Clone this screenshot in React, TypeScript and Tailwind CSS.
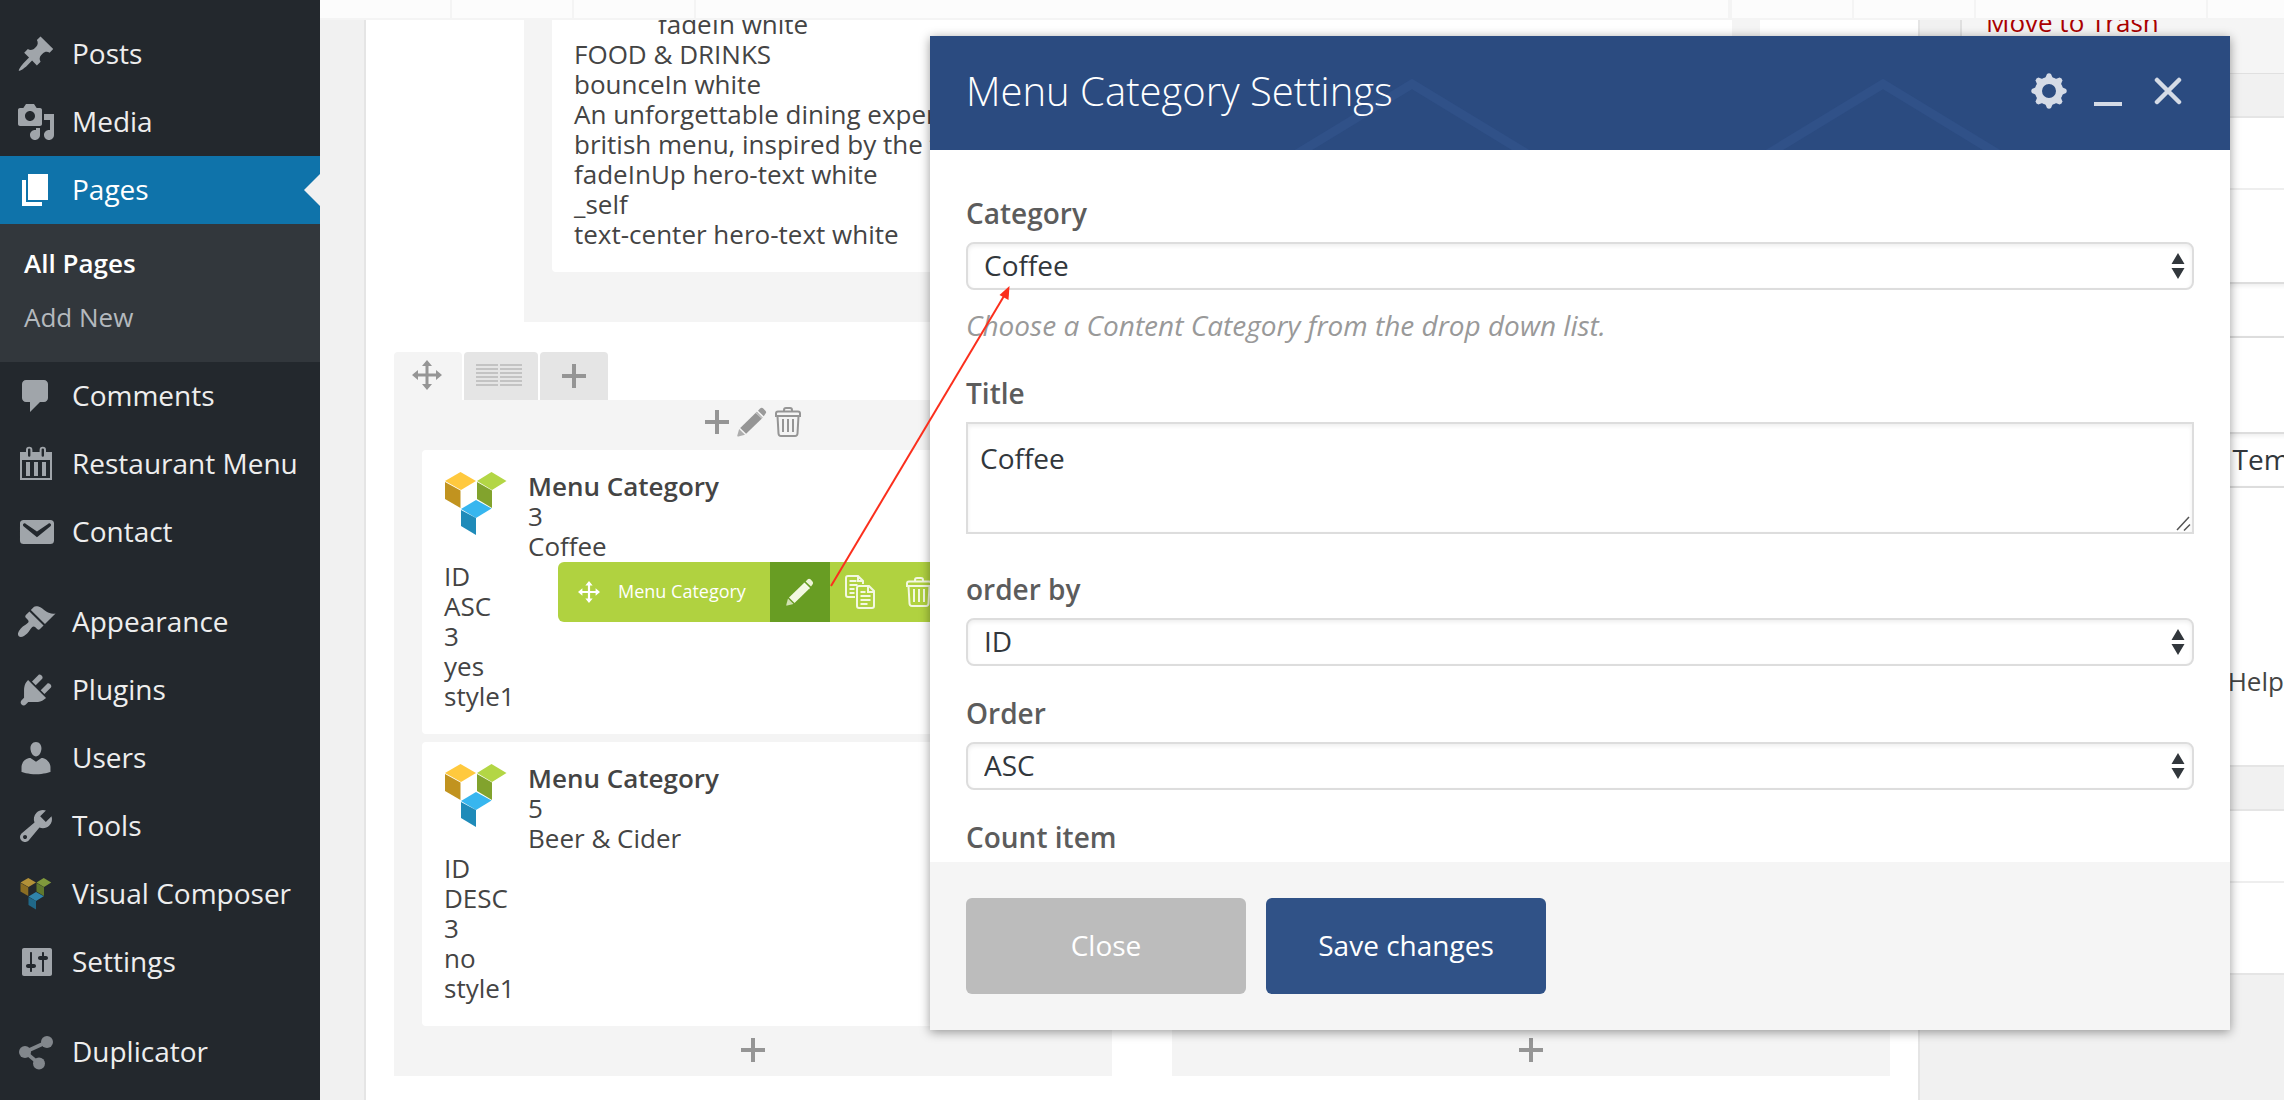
import React from "react";

type IconProps = { className?: string };

const dashicons = {
  posts:
    "M10.44 3.02l1.82-1.82 6.36 6.35-1.83 1.82c-1.05-.68-2.48-.57-3.41.36l-.75.75c-.92.93-1.04 2.35-.35 3.41l-1.83 1.82-2.41-2.41-2.8 2.79c-.42.42-3.38 2.71-3.8 2.29s1.86-3.39 2.28-3.81l2.79-2.79L4.1 9.36l1.83-1.82c1.05.69 2.48.57 3.4-.36l.75-.75c.93-.92 1.05-2.35.36-3.41z",
  media:
    "M13 11V4c0-.55-.45-1-1-1h-1.67L9 1H5L3.67 3H2c-.55 0-1 .45-1 1v7c0 .55.45 1 1 1h10c.55 0 1-.45 1-1zM7 4.5c1.38 0 2.5 1.12 2.5 2.5S8.38 9.5 7 9.5 4.5 8.38 4.5 7 5.62 4.5 7 4.5zM14 6h5v10.5c0 1.38-1.12 2.5-2.5 2.5S14 17.88 14 16.5s1.12-2.5 2.5-2.5c.17 0 .34.02.5.05V9h-3V6zm-4 8.05V13h2v3.5c0 1.38-1.12 2.5-2.5 2.5S7 17.88 7 16.5 8.12 14 9.5 14c.17 0 .34.02.5.05z",
  pages: "M6 15V2h10v13H6zm-1 1h8v2H3V5h2v11z",
  comments:
    "M5 2h9c1.1 0 2 .9 2 2v7c0 1.1-.9 2-2 2h-2l-5 5v-5H5c-1.1 0-2-.9-2-2V4c0-1.1.9-2 2-2z",
  restaurant:
    "M2 4h3V3a1.6 1.6 0 0 1 3.200 0v1h3.600V3a1.6 1.6 0 0 1 3.200 0v1h3v14H2zM3 8v9h14V8zM6 2.800v3a.6.6 0 0 0 1.200 0v-3a.6.6 0 0 0-1.200 0zM12.800 2.800v3a.6.6 0 0 0 1.200 0v-3a.6.6 0 0 0-1.200 0zM5 9h2v7H5zM9 9h2v7H9zM13 9h2v7h-2z",
  contact:
    "M3.870 4h13.250C18.370 4 19 4.590 19 5.790v8.420c0 1.190-.63 1.790-1.880 1.790H3.870c-1.250 0-1.880-.6-1.880-1.790V5.790c0-1.200.63-1.790 1.880-1.790zm6.620 8.600l6.740-5.530c.24-.2.43-.66.13-1.070-.29-.41-.82-.42-1.170-.17l-5.700 3.860L4.800 5.830c-.35-.25-.88-.24-1.170.17-.3.41-.11.87.13 1.070z",
  appearance:
    "M14.48 11.06L7.41 3.99l1.5-1.5c.5-.56 2.3-.47 3.51.32 1.21.8 1.43 1.28 2.91 2.1 1.18.64 2.45 1.26 4.45.85zm-.71.71L6.7 4.7 4.93 6.47c-.39.39-.39 1.02 0 1.41l1.06 1.06c.39.39.39 1.03 0 1.42-.6.6-1.43 1.11-2.21 1.69-.35.26-.7.53-1.01.84C1.43 14.23.4 16.08 1.4 17.07c.99 1 2.84-.03 4.18-1.36.31-.31.58-.66.85-1.02.57-.78 1.08-1.61 1.69-2.21.39-.39 1.02-.39 1.41 0l1.06 1.06c.39.39 1.02.39 1.41 0z",
  plugins:
    "M13.11 4.36L9.87 7.6 8 5.73l3.24-3.24c.35-.34 1.05-.2 1.56.32.52.51.66 1.21.31 1.55zm-8 1.77l.91-1.12 9.01 9.01-1.19.84c-.71.71-2.63 1.16-3.82 1.16H6.14L4.9 17.26c-.59.59-1.54.59-2.12 0-.59-.58-.59-1.53 0-2.12l1.24-1.24v-3.88c0-1.13.4-3.19 1.09-3.89zm7.26 3.97l3.24-3.24c.34-.35 1.04-.21 1.55.31.52.51.66 1.21.31 1.55l-3.24 3.25z",
  users:
    "M10 9.25c-2.27 0-2.73-3.44-2.73-3.44C7 4.02 7.82 2 9.97 2c2.16 0 2.98 2.02 2.71 3.81 0 0-.41 3.44-2.68 3.44zm0 2.57L12.72 10c2.39 0 4.52 2.33 4.52 4.53v2.49s-3.65 1.13-7.24 1.13c-3.65 0-7.24-1.13-7.24-1.13v-2.49c0-2.25 1.94-4.48 4.47-4.48z",
  tools:
    "M16.68 9.77c-1.34 1.34-3.3 1.67-4.95.99l-5.41 6.52c-.99.99-2.59.99-3.58 0s-.99-2.59 0-3.57l6.52-5.42c-.68-1.65-.35-3.61.99-4.95 1.28-1.28 3.12-1.62 4.72-1.06l-2.89 2.89 2.82 2.82 2.86-2.87c.53 1.58.18 3.39-1.08 4.65zM3.81 16.21c.4.39 1.04.39 1.43 0 .4-.4.4-1.04 0-1.43-.39-.4-1.03-.4-1.43 0-.39.39-.39 1.03 0 1.43z",
  settings:
    "M18 16V4c0-.55-.45-1-1-1H4c-.55 0-1 .45-1 1v12c0 .55.45 1 1 1h13c.55 0 1-.45 1-1zM8 11h1c.55 0 1 .45 1 1s-.45 1-1 1H8v1.5c0 .28-.22.5-.5.5s-.5-.22-.5-.5V13H6c-.55 0-1-.45-1-1s.45-1 1-1h1V5.5c0-.28.22-.5.5-.5s.5.22.5.5V11zm5-2h-1c-.55 0-1-.45-1-1s.45-1 1-1h1V5.5c0-.28.22-.5.5-.5s.5.22.5.5V7h1c.55 0 1 .45 1 1s-.45 1-1 1h-1v5.5c0 .28-.22.5-.5.5s-.5-.22-.5-.5V9z",
};

function Dashicon({ d, className = "" }: { d: string; className?: string }) {
  return (
    <svg viewBox="0 0 20 20" fill="currentColor" fillRule="evenodd" aria-hidden="true" className={`size-10 shrink-0 ${className}`}>
      <path d={d} />
    </svg>
  );
}

function ComposerLogo({ className = "" }: IconProps) {
  return (
    <svg viewBox="0 0 62 64" aria-hidden="true" className={className}>
      <path fill="#ffc93e" d="M0 9 15.500 0 31 9 16 18z" />
      <path fill="#c1931f" d="M0 10 15.500 18.500V36L0 27z" />
      <path fill="#b3d645" d="M32 9 46.500 0 61.500 9 47 18z" />
      <path fill="#82a32d" d="M32 10 47 18.500V36L32 27z" />
      <path fill="#37b6ef" d="M16 37 31 28 46.500 36.500 31 46z" />
      <path fill="#1f8bb9" d="M16 38 31 46V63L16 54z" />
    </svg>
  );
}

function ShareNodes() {
  return (
    <svg viewBox="0 0 20 20" aria-hidden="true" className="size-10 shrink-0 text-[#82878c]" fill="currentColor">
      <path d="M15.500 5 4.500 10l7 5.800" fill="none" stroke="currentColor" strokeWidth="1.900" />
      <circle cx="15.500" cy="5" r="3" />
      <circle cx="4.500" cy="10" r="3" />
      <circle cx="11.500" cy="15.800" r="3" />
    </svg>
  );
}

function PlusIcon({ className = "" }: IconProps) {
  return (
    <svg viewBox="0 0 24 24" aria-hidden="true" className={className} fill="currentColor">
      <path d="M10 0h4v10h10v4H14v10h-4V14H0v-4h10z" />
    </svg>
  );
}

function MoveIcon({ className = "" }: IconProps) {
  return (
    <svg viewBox="0 0 30 30" aria-hidden="true" className={className} fill="currentColor">
      <path d="M15 0l5 6h-3.500v7.500H24V10l6 5-6 5v-3.500h-7.500V24H20l-5 6-5-6h3.500v-7.500H6V20l-6-5 6-5v3.500h7.500V6H10z" />
    </svg>
  );
}

function PencilIcon({ className = "" }: IconProps) {
  return (
    <svg viewBox="0 0 28 28" aria-hidden="true" className={className} fill="currentColor">
      <path d="M18.500 4.500l5.500 5.500L8.500 25 3 19.500z" />
      <path d="M19.600 3.400l1.900-1.900q1.500-1.500 3-.2l2 2.100q1.400 1.500 0 3l-1.500 2.200z" opacity=".95" />
      <path d="M17.700 5.300l6 5.600" stroke="#fff" strokeOpacity=".5" strokeWidth="1" />
      <path d="M2 20.500L7.500 26l-6.300 1.600Q0 27.800.3 26.700z" opacity=".75" />
    </svg>
  );
}

function TrashIcon({ className = "" }: IconProps) {
  return (
    <svg viewBox="0 0 26 30" aria-hidden="true" className={className} fill="none" stroke="currentColor" strokeWidth="2">
      <path d="M9 4.500V3q0-2 2-2h4q2 0 2 2v1.500" />
      <path d="M3 4.500h20q2 0 2 2V9H1V6.500q0-2 2-2z" />
      <path d="M2.500 9l1 17.500q.2 2.500 2.500 2.500h14q2.300 0 2.500-2.500l1-17.500M8 12v13M13 12v13M18 12v13" />
    </svg>
  );
}

function CopyIcon({ className = "" }: IconProps) {
  return (
    <svg viewBox="0 0 30 34" aria-hidden="true" className={className} fill="none" stroke="currentColor" strokeWidth="2">
      <path d="M10 22H3q-2 0-2-2V3q0-2 2-2h10l5 5v3M4.500 6h7M4.500 10h8M4.500 14h5M4.500 18h5M13 1v5h5" />
      <path d="M12 13q0-2 2-2h10l5 5v15q0 2-2 2H14q-2 0-2-2zM23 11v6h6M15.500 17h5M15.500 21h10M15.500 25h10M15.500 29h7" />
    </svg>
  );
}

function ColumnsIcon({ className = "" }: IconProps) {
  return (
    <svg viewBox="0 0 46 24" aria-hidden="true" className={className} stroke="#c3c3c3" strokeWidth="2">
      <path d="M0 1h22M0 5h22M0 9h22M0 13h22M0 17h22M0 21h22M24 1h22M24 5h22M24 9h22M24 13h22M24 17h22M24 21h22" />
    </svg>
  );
}

function GearIcon({ className = "" }: IconProps) {
  return (
    <svg viewBox="0 0 36 36" aria-hidden="true" className={className}>
      <circle cx="18" cy="18" r="10.500" fill="none" stroke="currentColor" strokeWidth="7" />
      {[0, 45, 90, 135, 180, 225, 270, 315].map((a) => (
        <path key={a} d="M14 5.500 16 1q2-1.500 4 0l2 4.500z" fill="currentColor" transform={`rotate(${a} 18 18)`} />
      ))}
    </svg>
  );
}

function NavItem({ icon, children }: { icon: React.ReactNode; children: React.ReactNode }) {
  return (
    <li>
      <a href="#" className="flex h-[68px] items-center gap-4 pl-4 text-[#eee]">
        <span className="flex size-10 items-center justify-center text-[#a0a5aa]">{icon}</span>
        <span className="pb-0.5">{children}</span>
      </a>
    </li>
  );
}

function AdminMenu() {
  return (
    <nav aria-label="Main menu" className="w-80 shrink-0 bg-[#23282d] pt-5 text-[28px] leading-9">
      <ul>
        <NavItem icon={<Dashicon d={dashicons.posts} />}>Posts</NavItem>
        <NavItem icon={<Dashicon d={dashicons.media} />}>Media</NavItem>
        <li>
          <a href="#" aria-current="page" className="relative flex h-[68px] items-center gap-4 bg-[#0f73aa] pl-4 text-white">
            <Dashicon d={dashicons.pages} />
            <span className="pb-0.5">Pages</span>
            <span className="absolute top-1/2 right-0 -translate-y-1/2 border-y-16 border-r-16 border-y-transparent border-r-[#f1f1f1]" />
          </a>
          <ul className="bg-[#32373c] px-6 pt-3 pb-[18px] text-[26px]">
            <li>
              <a href="#" className="block py-[9px] font-semibold text-white">All Pages</a>
            </li>
            <li>
              <a href="#" className="block py-[9px] text-[#b4b9be]">Add New</a>
            </li>
          </ul>
        </li>
        <NavItem icon={<Dashicon d={dashicons.comments} />}>Comments</NavItem>
        <NavItem icon={<Dashicon d={dashicons.restaurant} />}>Restaurant Menu</NavItem>
        <NavItem icon={<Dashicon d={dashicons.contact} />}>Contact</NavItem>
      </ul>
      <ul className="mt-[22px]">
        <NavItem icon={<Dashicon d={dashicons.appearance} />}>Appearance</NavItem>
        <NavItem icon={<Dashicon d={dashicons.plugins} />}>Plugins</NavItem>
        <NavItem icon={<Dashicon d={dashicons.users} />}>Users</NavItem>
        <NavItem icon={<Dashicon d={dashicons.tools} />}>Tools</NavItem>
        <NavItem icon={<ComposerLogo className="size-8 opacity-65" />}>Visual Composer</NavItem>
        <NavItem icon={<Dashicon d={dashicons.settings} />}>Settings</NavItem>
      </ul>
      <ul className="mt-[22px]">
        <NavItem icon={<ShareNodes />}>Duplicator</NavItem>
      </ul>
    </nav>
  );
}

function StickyBar() {
  return (
    <div className="flex h-5 shrink-0 border-b-2 border-[#f4f4f4] bg-[#fcfcfc]">
      <div className="w-[132px] border-r-2 border-[#f4f4f4]" />
      <div className="w-[122px] border-r-2 border-[#f4f4f4]" />
      <div className="w-[122px] border-r-2 border-[#f4f4f4]" />
      <div className="flex-1 border-r-4 border-[#f4f4f4]" />
      <div className="w-[122px] border-r-2 border-[#f4f4f4]" />
      <div className="w-[122px] border-r-2 border-[#f4f4f4]" />
      <div className="w-[232px] border-r-2 border-[#f4f4f4]" />
      <div className="w-[76px]" />
    </div>
  );
}

function ElementToolbar() {
  return (
    <div className="absolute top-1/2 left-1/2 flex h-[60px] -translate-x-1/2 -translate-y-1/2 overflow-hidden rounded-md bg-[#b0d240] text-[#f3f8e2]">
      <button className="flex w-[212px] items-center gap-[18px] pl-5 text-[18px] text-white">
        <MoveIcon className="size-[22px]" />
        <span className="pb-0.5">Menu Category</span>
      </button>
      <button aria-label="Edit" className="flex w-[60px] items-center justify-center bg-[#689d23]">
        <PencilIcon className="size-7" />
      </button>
      <button aria-label="Clone" className="flex w-[60px] items-center justify-center">
        <CopyIcon className="h-[34px] w-[30px]" />
      </button>
      <button aria-label="Delete" className="flex w-[58px] items-center justify-center">
        <TrashIcon className="h-[30px] w-[26px]" />
      </button>
    </div>
  );
}

type CategoryCard = { id: string; title: string; params: string[]; hovered?: boolean };

const cards: CategoryCard[] = [
  { id: "3", title: "Coffee", params: ["ID", "ASC", "3", "yes", "style1"], hovered: true },
  { id: "5", title: "Beer & Cider", params: ["ID", "DESC", "3", "no", "style1"] },
];

function MenuCategoryCard({ card }: { card: CategoryCard }) {
  return (
    <article className="relative rounded-sm bg-white px-[22px] pt-[21px] pb-[23px]">
      <div className="flex gap-[21px]">
        <ComposerLogo className="mt-px ml-px h-16 w-[62px]" />
        <div>
          <h4 className="font-semibold">Menu Category</h4>
          <p>{card.id}</p>
          <p>{card.title}</p>
        </div>
      </div>
      {card.params.map((p, i) => (
        <p key={i}>{p}</p>
      ))}
      {card.hovered && <ElementToolbar />}
    </article>
  );
}

function Editor() {
  return (
    <section className="min-w-0 flex-1 border-x-2 border-[#e5e5e5] bg-white text-[26px] leading-[30px] text-[#444]">
      <div className="-mt-[11px] mr-[158px] ml-[158px] bg-[#f4f4f4] px-7 pb-[50px]">
        <div className="rounded-b-sm bg-white px-[22px] pb-[23px] whitespace-nowrap">
          <p className="pl-[84px]">fadeIn white</p>
          <p>FOOD &amp; DRINKS</p>
          <p>bounceIn white</p>
          <p>An unforgettable dining experience</p>
          <p>british menu, inspired by the finest</p>
          <p>fadeInUp hero-text white</p>
          <p>_self</p>
          <p>text-center hero-text white</p>
        </div>
      </div>
      <div className="mt-[30px] px-7 text-[#959595]">
        <div className="flex h-12 gap-0.5">
          <button aria-label="Move row" className="flex w-[68px] items-center justify-center rounded-t-sm bg-[#f4f4f4] pr-0.5 pb-0.5">
            <MoveIcon className="size-[30px]" />
          </button>
          <button aria-label="Row layout" className="flex w-[74px] items-center justify-center rounded-t-sm bg-[#e5e5e5] pr-1">
            <ColumnsIcon className="h-6 w-[46px]" />
          </button>
          <button aria-label="Add column" className="flex w-[68px] items-center justify-center rounded-t-sm bg-[#e5e5e5]">
            <PlusIcon className="size-6" />
          </button>
        </div>
        <div className="grid grid-cols-2 gap-[60px]">
          <div className="flex flex-col bg-[#f4f4f4] px-7">
            <div className="flex h-[50px] items-center justify-center gap-2 pb-1.5">
              <button aria-label="Prepend element">
                <PlusIcon className="size-6" />
              </button>
              <button aria-label="Edit column">
                <PencilIcon className="size-[30px]" />
              </button>
              <button aria-label="Delete column">
                <TrashIcon className="h-[30px] w-[26px]" />
              </button>
            </div>
            <div className="flex flex-col gap-2 text-[#444]">
              {cards.map((card) => (
                <MenuCategoryCard key={card.id} card={card} />
              ))}
            </div>
            <button aria-label="Append element" className="flex h-[50px] items-center justify-center pb-0.5">
              <PlusIcon className="size-6" />
            </button>
          </div>
          <div className="flex flex-col justify-end bg-[#f4f4f4]">
            <button aria-label="Append element" className="flex h-[50px] items-center justify-center pb-0.5">
              <PlusIcon className="size-6" />
            </button>
          </div>
        </div>
      </div>
    </section>
  );
}

function SideBoxes() {
  return (
    <aside className="w-[324px] shrink-0 overflow-hidden text-[26px] leading-9 text-[#444]">
      <div className="w-[560px]">
        <div className="-mt-4 h-[70px] border-b border-l-2 border-[#e0e0e0] bg-[#f5f5f5] pl-6">
          <a href="#" className="text-[#a00]">Move to Trash</a>
        </div>
        <div className="mt-[42px] border-2 border-[#e5e5e5] bg-white">
          <div className="h-[72px] border-b-2 border-[#eee]" />
          <div className="px-6 pt-[92px]">
            <select aria-label="Parent" className="block h-14 w-full appearance-none border-2 border-[#ddd] bg-white shadow-[inset_0_2px_4px_rgba(0,0,0,0.07)]" />
            <select
              aria-label="Template"
              className="mt-[94px] block h-14 w-full appearance-none border-2 border-[#ddd] bg-white pb-0.5 pl-[142px] text-[28px] text-[#32373c] shadow-[inset_0_2px_4px_rgba(0,0,0,0.07)]"
            >
              <option>Default Template</option>
            </select>
            <p className="mt-[175px] pb-[30px]">Need help? Use the Help tab above the screen title.</p>
          </div>
        </div>
        <div className="mt-[42px] h-[166px] border-2 border-[#e5e5e5] bg-white">
          <div className="h-[72px] border-b-2 border-[#eee]" />
        </div>
      </div>
    </aside>
  );
}

function SelectField({ id, label, value }: { id: string; label: string; value: string }) {
  return (
    <div>
      <label htmlFor={id} className="block font-semibold text-[#5c5c5c]">{label}</label>
      <div className="relative mt-[11px]">
        <select
          id={id}
          defaultValue={value}
          className="block h-12 w-full appearance-none rounded-lg border-2 border-[#ddd] bg-white pb-0.5 pl-4 text-[#32373c] shadow-[inset_0_2px_4px_rgba(0,0,0,0.07)]"
        >
          <option>{value}</option>
        </select>
        <svg viewBox="0 0 14 26" aria-hidden="true" className="pointer-events-none absolute top-[11px] right-[9px] h-[26px] w-[14px]" fill="#32373c">
          <path d="M7 0l6.500 11H.5zM7 26l6.500-11H.5z" />
        </svg>
      </div>
    </div>
  );
}

function SettingsDialog() {
  return (
    <div
      role="dialog"
      aria-labelledby="dialog-title"
      className="absolute top-9 right-[54px] bottom-[70px] left-[930px] flex flex-col bg-white text-[28px] leading-9 shadow-[0_2px_10px_rgba(0,0,0,0.4)]"
    >
      <header className="relative flex h-[114px] shrink-0 items-center overflow-hidden bg-[#2b4b80] pr-12 pb-1 pl-9 text-[#d5dbe6]">
        <svg aria-hidden="true" className="pointer-events-none absolute inset-0 size-full" fill="none" stroke="#305188" strokeWidth="9">
          <path d="M362 121l120-73 120 73M833 121l120-73 120 73" />
        </svg>
        <h2 id="dialog-title" className="relative flex-1 text-[40px] leading-[56px] font-light text-white">Menu Category Settings</h2>
        <button aria-label="Settings" className="relative">
          <GearIcon className="size-9" />
        </button>
        <button aria-label="Minimize" className="relative ml-[27px] h-9">
          <svg viewBox="0 0 28 36" aria-hidden="true" className="h-9 w-7" fill="currentColor">
            <path d="M0 29h28v4H0z" />
          </svg>
        </button>
        <button aria-label="Close dialog" className="relative ml-8">
          <svg viewBox="0 0 28 28" aria-hidden="true" className="size-7" stroke="currentColor" strokeWidth="4.500" strokeLinecap="round">
            <path d="M3 3l22 22M25 3L3 25" />
          </svg>
        </button>
      </header>
      <div className="min-h-0 flex-1 overflow-hidden px-9 pt-[45px]">
        <SelectField id="category" label="Category" value="Coffee" />
        <p className="mt-[17px] mb-8 text-[#999] italic">Choose a Content Category from the drop down list.</p>
        <label htmlFor="title" className="block font-semibold text-[#5c5c5c]">Title</label>
        <div className="relative mt-[11px] mb-[37px]">
          <textarea
            id="title"
            defaultValue="Coffee"
            className="block h-28 w-full resize-none border-2 border-[#ddd] px-3 pt-4 text-[#32373c] shadow-[inset_0_2px_4px_rgba(0,0,0,0.07)]"
          />
          <svg viewBox="0 0 16 16" aria-hidden="true" className="pointer-events-none absolute right-[3px] bottom-[3px] size-4" stroke="#555" strokeWidth="1.500">
            <path d="M2 15L14 2M9 15.500l6-6" />
          </svg>
        </div>
        <div className="flex flex-col gap-[29px]">
          <SelectField id="orderby" label="order by" value="ID" />
          <SelectField id="order" label="Order" value="ASC" />
          <p className="font-semibold text-[#5c5c5c]">Count item</p>
        </div>
      </div>
      <footer className="flex shrink-0 gap-5 bg-[#f5f5f5] p-9 text-white">
        <button className="h-24 w-[280px] rounded-md bg-[#bcbcbc] pb-0.5">Close</button>
        <button className="h-24 w-[280px] rounded-md bg-[#305287] pb-0.5">Save changes</button>
      </footer>
    </div>
  );
}

function PointerArrow() {
  return (
    <svg viewBox="0 0 190 310" aria-hidden="true" className="pointer-events-none absolute top-[280px] left-[825px] h-[310px] w-[190px]">
      <path d="M6 306L179 16" stroke="#fb2f1d" strokeWidth="2" />
      <path d="M184.500 6l-1 14-9-5z" fill="#fb2f1d" />
    </svg>
  );
}

export default function App() {
  return (
    <div className="relative flex h-screen overflow-hidden bg-[#f1f1f1] font-['Open_Sans',sans-serif]">
      <AdminMenu />
      <main className="flex min-w-0 flex-1 flex-col">
        <StickyBar />
        <div className="flex min-h-0 flex-1 gap-10 overflow-hidden pl-11">
          <Editor />
          <SideBoxes />
        </div>
      </main>
      <SettingsDialog />
      <PointerArrow />
    </div>
  );
}
